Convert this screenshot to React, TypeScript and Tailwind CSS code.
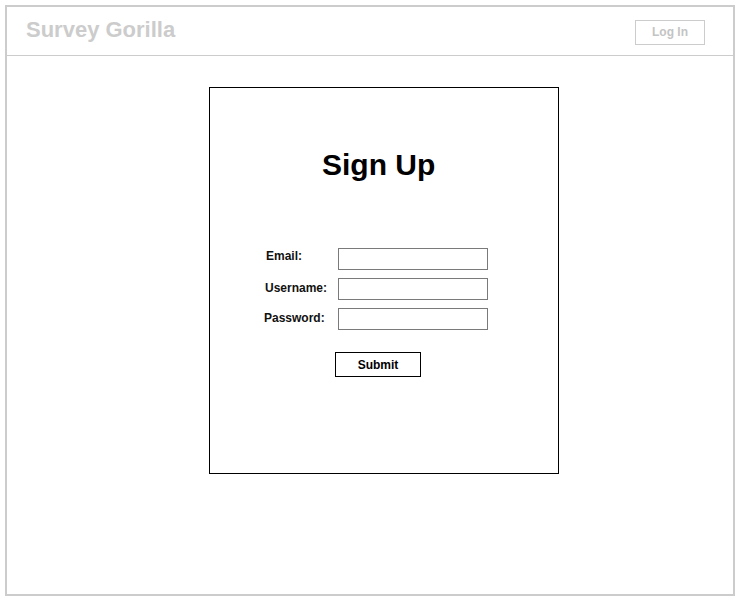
const fields = [
  { label: 'Email:', pad: 'pl-[2px]' },
  { label: 'Username:', pad: 'pl-[1px]' },
  { label: 'Password:', pad: 'pl-0' },
];

export default function App() {
  return (
    <div className="w-[738px] h-[600px] bg-white pt-[5px] pl-[5px] font-['Liberation_Sans',Arial,sans-serif]">
      <div className="w-[730px] h-[591px] border-2 border-[#cccccc] flex flex-col">
        {/* header */}
        <div className="h-[49px] border-b border-[#cccccc] flex items-center justify-between pl-[19px] pr-[28px]">
          <span className="text-[22px] font-bold text-[#cccccc] leading-none -mt-[3px]">Survey Gorilla</span>
          <button className="w-[70px] h-[25px] border border-[#cccccc] text-[12px] text-[#c4c4c4] font-bold leading-none mt-[2px]">
            Log In
          </button>
        </div>

        {/* card */}
        <div className="ml-[202px] mt-[31px] w-[350px] h-[387px] border border-black flex flex-col">
          <h1 className="mt-[62px] pl-[112px] text-[30px] font-bold text-black leading-none">Sign Up</h1>

          <div className="mt-[68px] pl-[54px] flex flex-col gap-[8px]">
            {fields.map((f) => (
              <div key={f.label} className="flex items-center h-[22px]">
                <span className={`w-[74px] text-[12px] font-bold text-[#111] ${f.pad} ${f.label === 'Email:' ? '-mt-[6px]' : '-mt-[2px]'}`}>
                  {f.label}
                </span>
                <input className="w-[150px] h-[22px] border border-[#7a7a7a] outline-none" />
              </div>
            ))}
          </div>

          <button className="mt-[22px] ml-[125px] w-[86px] h-[25px] border border-black text-[12px] font-bold text-black leading-none">
            Submit
          </button>
        </div>
      </div>
    </div>
  );
}
